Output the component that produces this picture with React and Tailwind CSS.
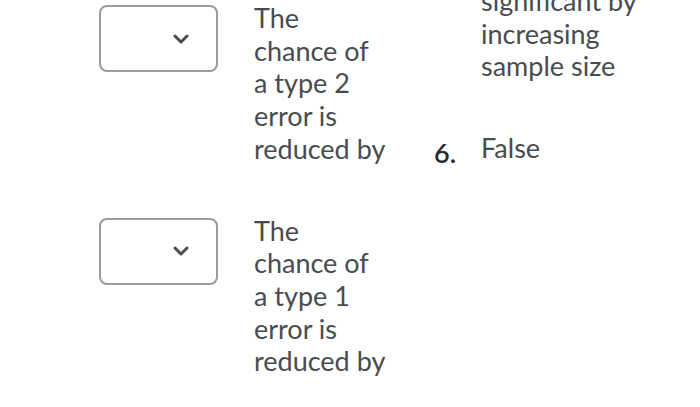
import React from "react";

function Select() {
  return (
    <div className="mt-[3px] flex h-[67px] w-[119px] shrink-0 items-center justify-end rounded-[8px] border-2 border-[#9a9c9e] bg-white pr-[27px]">
      <svg width="16" height="10" viewBox="0 0 16 10" fill="none">
        <path d="M2 2 L8 8 L14 2" stroke="#494c4e" strokeWidth="3" strokeLinecap="round" strokeLinejoin="round" />
      </svg>
    </div>
  );
}

function Row({ lines }) {
  return (
    <div className="flex items-start gap-[36px]">
      <Select />
      <div className="w-[135px] text-[27px] leading-[32.7px] text-[#494c4e]">
        {lines.map((l, i) => (
          <div key={i} className="whitespace-nowrap">{l}</div>
        ))}
      </div>
    </div>
  );
}

export default function App() {
  return (
    <div className="h-[407px] w-[700px] overflow-hidden bg-white" style={{ fontFamily: "Lato, 'Open Sans', sans-serif" }}>
      <div className="flex items-start pl-[99px] pt-[2px]">
        <div className="flex flex-col gap-[49px]">
          <Row lines={["The", "chance of", "a type 2", "error is", "reduced by"]} />
          <Row lines={["The", "chance of", "a type 1", "error is", "reduced by"]} />
        </div>
        <div className="ml-[45px] mt-[-17px] flex flex-col gap-[49px] text-[27px] leading-[32.7px] text-[#494c4e]">
          <div className="flex">
            <div className="w-[47px]"></div>
            <div>
              <div className="whitespace-nowrap">significant by</div>
              <div>increasing</div>
              <div>sample size</div>
            </div>
          </div>
          <div className="flex">
            <div className="mt-[5px] w-[47px] font-semibold text-[#2a2b2c]">6.</div>
            <div>False</div>
          </div>
        </div>
      </div>
    </div>
  );
}
